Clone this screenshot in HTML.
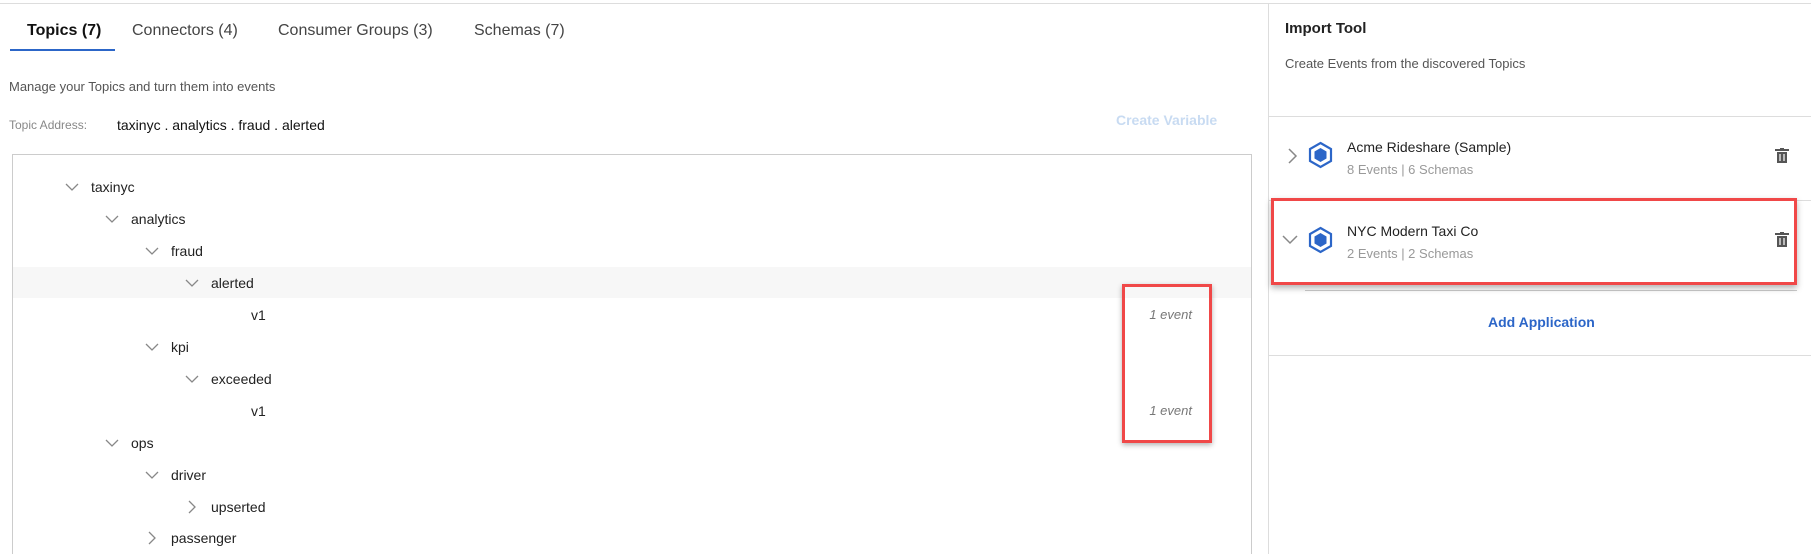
<!DOCTYPE html>
<html style="overflow:hidden;height:554px"><head><meta charset="utf-8"><style>
body{margin:0;width:1811px;height:554px;overflow:hidden;background:#fff;font-family:"Liberation Sans",sans-serif;color:#222;position:relative}
.a{position:absolute;white-space:nowrap}
.tab{position:absolute;top:22px;font-size:16px;color:#444}
.row{position:absolute;left:12px;width:1238px;height:32px}
.row span{position:absolute;top:8px;font-size:14px;color:#222}
.chev{position:absolute;top:9px;width:14px;height:14px}
.ev{position:absolute;right:58px;top:8px;font-size:13px;font-style:italic;color:#777}
</style></head><body>
<div class="a" style="left:0;top:3px;width:1811px;height:1px;background:#ddd"></div>
<div class="tab" style="left:27px;color:#111;font-weight:bold">Topics (7)</div>
<div class="tab" style="left:132px">Connectors (4)</div>
<div class="tab" style="left:278px">Consumer Groups (3)</div>
<div class="tab" style="left:474px">Schemas (7)</div>
<div class="a" style="left:10px;top:49px;width:105px;height:2px;background:#2c66c8"></div>
<div class="a" style="left:9px;top:79px;font-size:13px;color:#555">Manage your Topics and turn them into events</div>
<div class="a" style="left:9px;top:118px;font-size:12px;color:#888">Topic Address:</div>
<div class="a" style="left:117px;top:117px;font-size:14px;color:#111">taxinyc . analytics . fraud . alerted</div>
<div class="a" style="left:1116px;top:112px;font-size:14px;font-weight:bold;color:#c8dbf2">Create Variable</div>
<div class="a" style="left:12px;top:154px;width:1240px;height:410px;border:1px solid #ccc;box-sizing:border-box"></div>
<div class="a" style="left:13px;top:267px;width:1238px;height:31px;background:#f7f7f7"></div>

<svg width="0" height="0" style="position:absolute"><defs>
<symbol id="d" viewBox="0 0 14 14"><path d="M1 4l6 6 6-6" fill="none" stroke="#888" stroke-width="1.3"/></symbol>
<symbol id="r" viewBox="0 0 14 14"><path d="M4 1l6 6-6 6" fill="none" stroke="#888" stroke-width="1.3"/></symbol>
</defs></svg>

<div class="row" style="top:171px"><svg class="chev" style="left:53px"><use href="#d"/></svg><span style="left:79px">taxinyc</span></div>
<div class="row" style="top:203px"><svg class="chev" style="left:93px"><use href="#d"/></svg><span style="left:119px">analytics</span></div>
<div class="row" style="top:235px"><svg class="chev" style="left:133px"><use href="#d"/></svg><span style="left:159px">fraud</span></div>
<div class="row" style="top:267px"><svg class="chev" style="left:173px"><use href="#d"/></svg><span style="left:199px">alerted</span></div>
<div class="row" style="top:299px"><span style="left:239px">v1</span><div class="ev">1 event</div></div>
<div class="row" style="top:331px"><svg class="chev" style="left:133px"><use href="#d"/></svg><span style="left:159px">kpi</span></div>
<div class="row" style="top:363px"><svg class="chev" style="left:173px"><use href="#d"/></svg><span style="left:199px">exceeded</span></div>
<div class="row" style="top:395px"><span style="left:239px">v1</span><div class="ev">1 event</div></div>
<div class="row" style="top:427px"><svg class="chev" style="left:93px"><use href="#d"/></svg><span style="left:119px">ops</span></div>
<div class="row" style="top:459px"><svg class="chev" style="left:133px"><use href="#d"/></svg><span style="left:159px">driver</span></div>
<div class="row" style="top:491px"><svg class="chev" style="left:173px"><use href="#r"/></svg><span style="left:199px">upserted</span></div>
<div class="row" style="top:522px"><svg class="chev" style="left:133px"><use href="#r"/></svg><span style="left:159px">passenger</span></div>

<div class="a" style="left:1122px;top:284px;width:90px;height:159px;border:3px solid #f04848;box-sizing:border-box;box-shadow:0 2px 5px rgba(0,0,0,.3)"></div>

<div class="a" style="left:1268px;top:3px;width:1px;height:551px;background:#ddd"></div>
<div class="a" style="left:1285px;top:20px;font-size:15px;font-weight:bold;color:#222">Import Tool</div>
<div class="a" style="left:1285px;top:56px;font-size:13px;color:#555">Create Events from the discovered Topics</div>
<div class="a" style="left:1269px;top:116px;width:542px;height:1px;background:#ddd"></div>

<svg class="a" style="left:1287px;top:148px" width="12" height="16"><path d="M2 1l7 7-7 7" fill="none" stroke="#888" stroke-width="1.5"/></svg>
<svg class="a" style="left:1307px;top:141px" width="27" height="28" viewBox="0 0 27 28"><path d="M13.5 2L24 8v12l-10.5 6L3 20V8z" fill="none" stroke="#2c66c8" stroke-width="2.2"/><path d="M13.5 7l6 3.5v7l-6 3.5-6-3.5v-7z" fill="#2c66c8"/></svg>
<div class="a" style="left:1347px;top:139px;font-size:14px;color:#222">Acme Rideshare (Sample)</div>
<div class="a" style="left:1347px;top:162px;font-size:13px;color:#999">8 Events | 6 Schemas</div>
<svg class="a" style="left:1775px;top:148px" width="14" height="16"><rect x="0" y="1" width="14" height="2" fill="#555"/><rect x="5" y="0" width="4" height="2" fill="#555"/><path d="M2 4h10v11H2z" fill="#555"/><path d="M5 6v7M9 6v7" stroke="#fff" stroke-width="1.2"/></svg>
<div class="a" style="left:1269px;top:200px;width:542px;height:1px;background:#ddd"></div>
<div class="a" style="left:1305px;top:290px;width:492px;height:1px;background:#ccc"></div>

<div class="a" style="left:1271px;top:198px;width:526px;height:87px;border:3px solid #f04848;box-sizing:border-box;box-shadow:0 3px 6px rgba(0,0,0,.3);background:#fff"></div>
<svg class="a" style="left:1282px;top:234px" width="16" height="12"><path d="M1 2l7 7 7-7" fill="none" stroke="#888" stroke-width="1.5"/></svg>
<svg class="a" style="left:1307px;top:226px" width="27" height="28" viewBox="0 0 27 28"><path d="M13.5 2L24 8v12l-10.5 6L3 20V8z" fill="none" stroke="#2c66c8" stroke-width="2.2"/><path d="M13.5 7l6 3.5v7l-6 3.5-6-3.5v-7z" fill="#2c66c8"/></svg>
<div class="a" style="left:1347px;top:223px;font-size:14px;color:#222">NYC Modern Taxi Co</div>
<div class="a" style="left:1347px;top:246px;font-size:13px;color:#999">2 Events | 2 Schemas</div>
<svg class="a" style="left:1775px;top:232px" width="14" height="16"><rect x="0" y="1" width="14" height="2" fill="#555"/><rect x="5" y="0" width="4" height="2" fill="#555"/><path d="M2 4h10v11H2z" fill="#555"/><path d="M5 6v7M9 6v7" stroke="#fff" stroke-width="1.2"/></svg>

<div class="a" style="left:1488px;top:314px;font-size:14px;font-weight:bold;color:#2c66c8">Add Application</div>
<div class="a" style="left:1269px;top:355px;width:542px;height:1px;background:#ddd"></div>
</body></html>
